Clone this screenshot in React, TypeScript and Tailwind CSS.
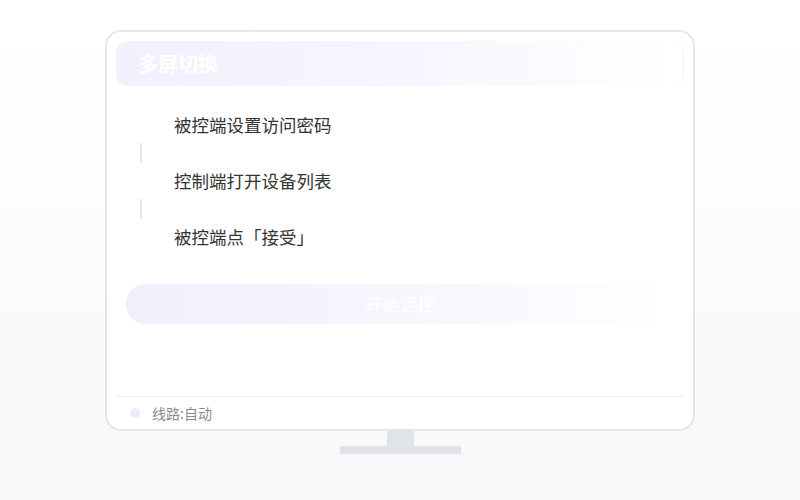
const font = { fontFamily: '"Noto Sans CJK SC", "Noto Sans", sans-serif' };

const steps = ['被控端设置访问密码', '控制端打开设备列表', '被控端点「接受」'];

export default function App() {
  return (
    <div
      className="w-[800px] h-[500px] flex flex-col items-center bg-gradient-to-b from-white to-[#f8f8fa] text-[#333]"
      style={font}
    >
      {/* Monitor */}
      <div className="mt-[30px] w-[590px] h-[401px] rounded-[16px] border-2 border-[#e4e6eb] bg-white flex flex-col">
        {/* Header */}
        <div className="mx-[9px] mt-[9px] h-[45px] rounded-[12px] bg-gradient-to-r from-[#f3f0fe] via-[#f7f5fe] to-white border-r border-[#f1f1f4] flex items-center pl-[22px]">
          <span className="text-[20px] font-bold text-white leading-none">多屏切换</span>
        </div>

        {/* Steps */}
        <div className="mt-[25px] flex flex-col">
          {steps.map((s, i) => (
            <div key={s} className="flex flex-col">
              {i > 0 && (
                <div className="h-[28px] flex items-center pl-[33px]">
                  <div className="w-[2px] h-[20px] bg-[#e6e7eb]" />
                </div>
              )}
              <div className="h-[28px] flex items-center pl-[67px] text-[17.5px] leading-none text-[#333]">
                {s}
              </div>
            </div>
          ))}
        </div>

        {/* Start button */}
        <div className="mt-[33px] mx-[19px] h-[40px] rounded-full bg-gradient-to-r from-[#f2effd] via-[#f7f5fe] to-white flex items-center justify-center">
          <span className="text-[17.5px] text-white leading-none">开始远控</span>
        </div>

        <div className="flex-1" />

        {/* Footer */}
        <div className="mx-[10px] h-[33px] border-t border-[#eeeff2] flex items-center pl-[13px] gap-[12px]">
          <span className="w-[10px] h-[10px] rounded-full bg-[#efebfd]" />
          <span className="text-[14px] text-[#8a8a8f] leading-none">线路:自动</span>
        </div>
      </div>

      {/* Stand */}
      <div className="w-[27px] h-[15px] bg-[#e0e3e8]" />
      <div className="w-[121px] h-[8px] bg-[#e0e3e8]" />
    </div>
  );
}
